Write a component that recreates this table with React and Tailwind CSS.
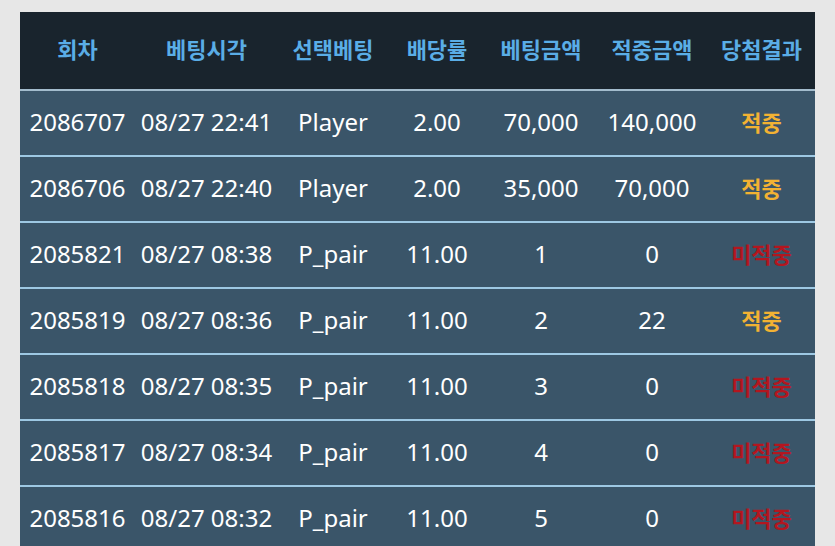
import React from 'react';

const rows = [
  { round: '2086707', time: '08/27 22:41', pick: 'Player', odds: '2.00', bet: '70,000', win: '140,000', result: 'hit' },
  { round: '2086706', time: '08/27 22:40', pick: 'Player', odds: '2.00', bet: '35,000', win: '70,000', result: 'hit' },
  { round: '2085821', time: '08/27 08:38', pick: 'P_pair', odds: '11.00', bet: '1', win: '0', result: 'miss' },
  { round: '2085819', time: '08/27 08:36', pick: 'P_pair', odds: '11.00', bet: '2', win: '22', result: 'hit' },
  { round: '2085818', time: '08/27 08:35', pick: 'P_pair', odds: '11.00', bet: '3', win: '0', result: 'miss' },
  { round: '2085817', time: '08/27 08:34', pick: 'P_pair', odds: '11.00', bet: '4', win: '0', result: 'miss' },
  { round: '2085816', time: '08/27 08:32', pick: 'P_pair', odds: '11.00', bet: '5', win: '0', result: 'miss' },
];

const headers = ['회차', '베팅시각', '선택베팅', '배당률', '베팅금액', '적중금액', '당첨결과'];

const cols = 'grid grid-cols-[115px_143px_110px_98px_110px_112px_107px]';

const App = () => {
  return (
    <div
      className="w-[835px] h-[546px] overflow-hidden bg-[#e7e7e7] pt-[12px] pl-[20px]"
      style={{ fontFamily: '"Noto Sans", "Noto Sans CJK KR", sans-serif' }}
    >
      <div className="w-[795px]">
        {/* Header */}
        <div className={`${cols} h-[77px] bg-[#19242d] items-center pb-[2px]`}>
          {headers.map((h) => (
            <div key={h} className="text-center text-[22px] font-bold text-[#5aade6]">
              {h}
            </div>
          ))}
        </div>

        {/* Rows */}
        {rows.map((r, i) => (
          <div
            key={r.round}
            className={`${cols} h-[66px] items-center bg-[#3a5569] border-t-2 ${
              i === 0 ? 'border-[#a3bccd]' : 'border-[#9dc8e3]'
            } text-white text-[24px] pb-[2px]`}
          >
            <div className="text-center">{r.round}</div>
            <div className="text-center">{r.time}</div>
            <div className="text-center">{r.pick}</div>
            <div className="text-center">{r.odds}</div>
            <div className="text-center">{r.bet}</div>
            <div className="text-center">{r.win}</div>
            <div
              className={`text-center text-[22px] font-bold ${
                r.result === 'hit' ? 'text-[#f2b233]' : 'text-[#b3161f]'
              }`}
            >
              {r.result === 'hit' ? '적중' : '미적중'}
            </div>
          </div>
        ))}
      </div>
    </div>
  );
};

export default App;
